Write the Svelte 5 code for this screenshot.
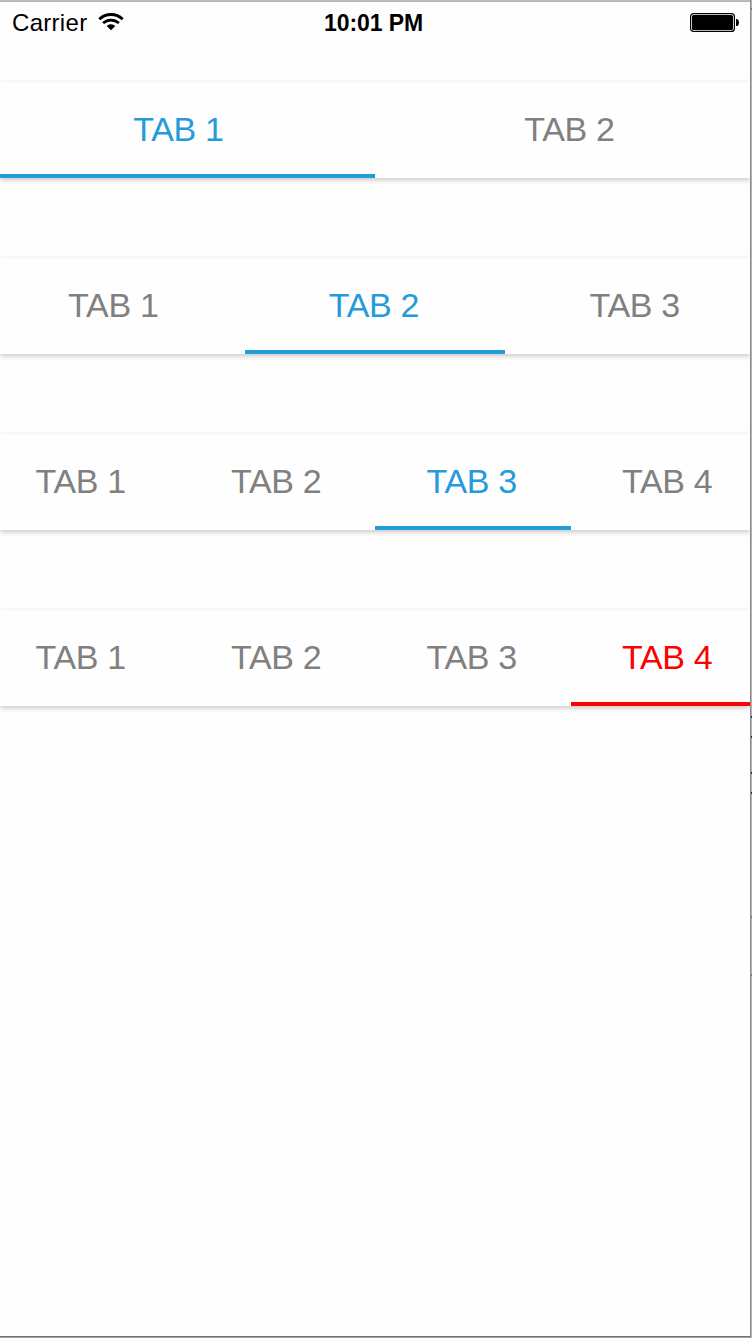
<script>
  const bars = [
    { count: 2, active: 1 },
    { count: 3, active: 2 },
    { count: 4, active: 3 },
    { count: 4, active: 4, red: true }
  ];
</script>

<div class="window">
  <main class="screen">
    <header class="status">
      <div class="carrier">
        <span>Carrier</span>
        <svg width="26" height="19" viewBox="0 0 26 19" fill="none" stroke="#000">
          <path d="M1.3 6.2C8-.1 18-.1 24.7 6.2" stroke-width="2.8" />
          <path d="M5.1 10.1C9.7 6 16.3 6 20.9 10.1" stroke-width="2.7" />
          <path d="M13 11.2c-1.7 0-3.2.6-4.3 1.7L13 17.2l4.3-4.3a6 6 0 0 0-4.3-1.7z" fill="#000" stroke="none" />
        </svg>
      </div>
      <div class="time">10:01 PM</div>
      <div class="power">
        <svg width="50" height="19" viewBox="0 0 50 19">
          <rect x=".6" y=".6" width="43.8" height="17.8" rx="3" fill="none" stroke="#000" stroke-width="1.2" />
          <rect x="2" y="2" width="41" height="15" rx="1.5" />
          <path d="M46 6h1.2q1.8 1 1.8 3.5t-1.8 3.5H46z" />
        </svg>
      </div>
    </header>
    {#each bars as bar}
      <nav class="bar" class:red={bar.red}>
        <div class="clip">
          <div class="tabs">
            {#each Array(bar.count) as _, i}
              <div class="tab" class:active={i + 1 === bar.active}><span>TAB {i + 1}</span></div>
            {/each}
          </div>
        </div>
      </nav>
    {/each}
  </main>
  <div class="edge">
    <i style="height: 8px"></i><b></b>
    <i style="height: 706px"></i><b class="blue"></b>
    <i style="height: 18px"></i><b class="blue"></b>
    <i style="height: 34px"></i><b class="blue"></b>
    <i style="height: 18px"></i><b class="blue"></b>
    <i style="height: 122px"></i><b></b>
    <i style="height: 56px"></i><b></b>
  </div>
</div>

<style>
  .window {
    display: grid;
    grid-template-columns: 750px 2px;
    box-sizing: border-box;
    width: 752px;
    height: 1338px;
    overflow: hidden;
    font-family: "Liberation Sans", Arial, sans-serif;
    background: linear-gradient(#bcbcbc 0 1px, #b2b2b2 1px 2px, #b2b2b2 1336px, #707070 1336px 1337px, #a3a3a3 1337px);
  }
  .screen {
    height: 1334px;
    margin-top: 2px;
    background: #fefefe;
  }
  .status {
    display: grid;
    grid-template-columns: 1fr auto 1fr;
    height: 40px;
    margin-bottom: 40px;
    padding: 0 10px 0 12px;
    font-size: 24px;
    line-height: 42px;
    color: #000;
  }
  .carrier {
    display: flex;
    gap: 10px;
  }
  .carrier span {
    width: 76px;
    letter-spacing: 0.3px;
  }
  .carrier svg {
    margin-top: 11px;
  }
  .time {
    padding-right: 5px;
    font-weight: 700;
    font-size: 23px;
    letter-spacing: -0.1px;
  }
  .power {
    display: flex;
    justify-content: flex-end;
  }
  .power svg {
    margin-top: 11px;
  }
  .bar {
    height: 96px;
    margin-bottom: 80px;
    background: #fefefe;
    box-shadow: 0 2px 5px rgba(0, 0, 0, 0.22);
  }
  .clip {
    height: 96px;
    overflow: hidden;
  }
  .tabs {
    display: flex;
    height: 96px;
    margin: 0 -16px;
  }
  .tab {
    display: flex;
    flex: 1;
    flex-direction: column;
    align-items: center;
    box-sizing: border-box;
    padding-right: 2px;
    border-bottom: 4px solid transparent;
    font-size: 34px;
    line-height: 94px;
    letter-spacing: -0.3px;
    color: #808080;
  }
  .active {
    color: #259bdb;
    border-bottom-color: #259bdb;
  }
  .red .active {
    color: #f00;
    border-bottom-color: #f00;
  }
  .edge {
    border-left: 1px solid #8c8c8c;
    background: #b2b2b2;
  }
  .edge i,
  .edge b {
    display: block;
  }
  .edge b {
    height: 2px;
    background: #777;
  }
  .edge b.blue {
    background: #252570;
  }
</style>
